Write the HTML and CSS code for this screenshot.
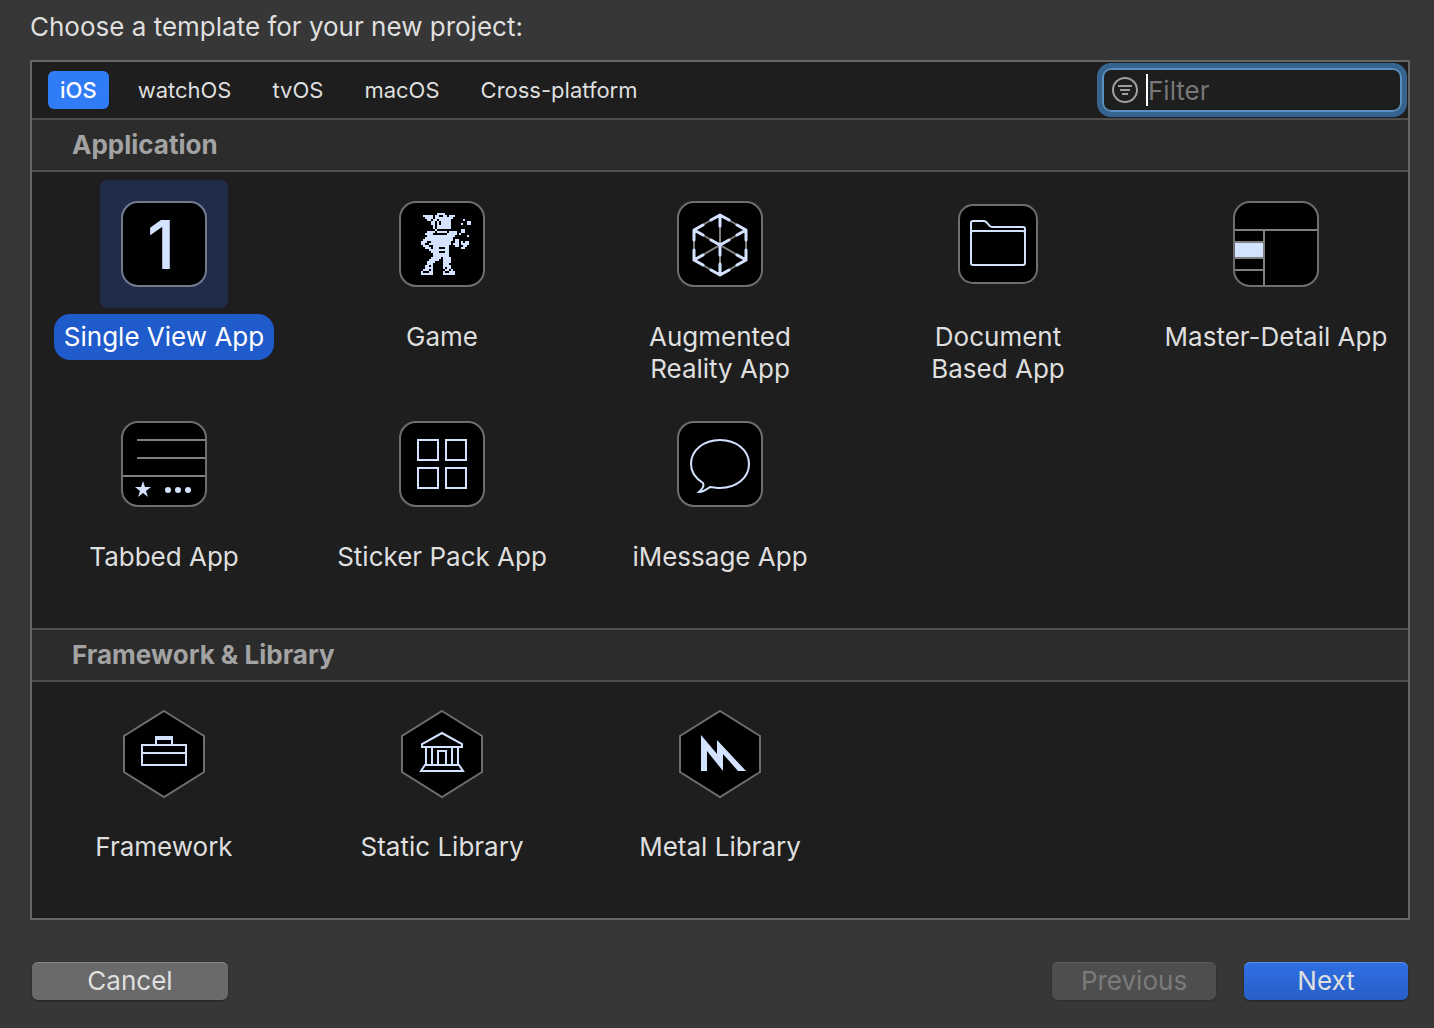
FILE: index.html
```html
<!DOCTYPE html>
<html lang="en">
<head>
<meta charset="utf-8">
<meta name="viewport" content="width=device-width, initial-scale=1">
<title>New Project</title>
<link rel="stylesheet" href="styles.css">
</head>
<body>
<main class="dialog">
  <h1 class="title">Choose a template for your new project:</h1>
  <div class="panel">
    <div class="toolbar">
      <nav class="tabs" aria-label="Platform">
        <button type="button" class="tab tab-active">iOS</button>
        <button type="button" class="tab">watchOS</button>
        <button type="button" class="tab">tvOS</button>
        <button type="button" class="tab">macOS</button>
        <button type="button" class="tab">Cross-platform</button>
      </nav>
      <label class="filter">
        <svg class="filter-icon" width="26" height="26" viewBox="0 0 26 26" aria-hidden="true"><circle cx="13" cy="13" r="12"/><path d="M6 9h14M8 13h10M10 17h6"/></svg>
        <span class="caret"></span>
        <input class="filter-input" type="text" placeholder="Filter" aria-label="Filter">
      </label>
    </div>

    <section>
      <h2 class="section-title">Application</h2>
      <div class="grid">
        <button type="button" class="item item-selected">
          <span class="tile"><svg class="icon" width="86" height="86" viewBox="0 0 86 86"><rect class="card" x="1" y="1" width="84" height="84" rx="16"/><text class="numeral" x="40" y="68">1</text></svg></span>
          <span class="label">Single View App</span>
        </button>
        <button type="button" class="item">
          <span class="tile"><svg class="icon" width="86" height="86" viewBox="0 0 86 86"><rect class="card" x="1" y="1" width="84" height="84" rx="16"/><g transform="translate(22 13) scale(2)"><path class="pixels" d="M8 0h4M1 1h5M7 1h2M11 1h2M14 1h3M2 2h4M7 2h9M3 3h2M6 3h2M9 3h6M21 3h1M5 4h2M8 4h1M10 4h5M5 5h2M8 5h1M10 5h5M23 4h2M23 5h2M20 5h1M6 6h1M8 6h7M6 7h1M8 7h7M20 8h2M20 9h2M7 8h1M3 9h4M8 9h5M14 9h4M2 10h4M13 10h5M19 10h1M3 11h14M23 11h1M2 12h14M1 13h15M17 13h2M0 14h3M5 14h10M17 14h2M20 14h1M22 14h2M0 15h2M4 15h11M16 15h3M20 15h4M1 16h3M6 16h8M17 16h2M21 16h2M2 17h3M6 17h3M12 17h2M20 17h2M4 18h10M5 19h4M12 19h2M6 20h8M6 21h8M5 22h5M11 22h4M4 23h5M11 23h4M3 24h4M11 24h4M3 25h3M11 25h3M2 26h2M5 26h1M11 26h4M2 27h4M11 27h1M13 27h2M1 28h3M5 28h1M12 28h2M15 28h1M0 29h1M4 29h2M11 29h1M14 29h3M0 30h6M11 30h6"/></g></svg></span>
          <span class="label">Game</span>
        </button>
        <button type="button" class="item">
          <span class="tile"><svg class="icon" width="86" height="86" viewBox="0 0 86 86"><rect class="card" x="1" y="1" width="84" height="84" rx="16"/><path class="rule" d="M43 14L69 29V59L43 74L17 59V29ZM43 14V74M17 29L69 59M69 29L17 59"/><path class="mark round" d="M43 25V14M34 19L43 14L52 19M43 63V74M34 69L43 74L52 69M17 39V29L26 24M17 29L26 34M69 39V29L60 24M69 29L60 34M17 49V59L26 64M17 59L26 54M69 49V59L60 64M69 59L60 54M43 54V44L34 39M43 44L52 39"/></svg></span>
          <span class="label">Augmented<br>Reality App</span>
        </button>
        <button type="button" class="item">
          <span class="tile"><svg class="icon" width="80" height="80" viewBox="0 0 80 80"><rect class="card" x="1" y="1" width="78" height="78" rx="14"/><path class="line" d="M13 19q0-2 2-2h11c4 0 4 6 8 6h31q2 0 2 2v34q0 2-2 2H15q-2 0-2-2zM13 29q0-2 2-2h50q2 0 2 2"/></svg></span>
          <span class="label">Document<br>Based App</span>
        </button>
        <button type="button" class="item">
          <span class="tile"><svg class="icon" width="86" height="86" viewBox="0 0 86 86"><rect class="card" x="1" y="1" width="84" height="84" rx="16"/><path class="solid" d="M2 42h28v14H2z"/><path class="rule" d="M2 29h82M31 29v55M2 41h28M2 57h28M2 69h28"/></svg></span>
          <span class="label">Master-Detail App</span>
        </button>
        <button type="button" class="item">
          <span class="tile"><svg class="icon" width="86" height="86" viewBox="0 0 86 86"><rect class="card" x="1" y="1" width="84" height="84" rx="16"/><path class="rule" d="M16 19h68M16 37h68M2 55h82"/><path class="solid" d="M22 60l2 6h6l-5 4 2 6-5-4-5 4 2-6-5-4h6z"/><circle class="solid" cx="47" cy="69" r="3"/><circle class="solid" cx="57" cy="69" r="3"/><circle class="solid" cx="67" cy="69" r="3"/></svg></span>
          <span class="label">Tabbed App</span>
        </button>
        <button type="button" class="item">
          <span class="tile"><svg class="icon" width="86" height="86" viewBox="0 0 86 86"><rect class="card" x="1" y="1" width="84" height="84" rx="16"/><path class="line" d="M19 19h20v20H19zM47 19h20v20H47zM19 47h20v20H19zM47 47h20v20H47z"/></svg></span>
          <span class="label">Sticker Pack App</span>
        </button>
        <button type="button" class="item">
          <span class="tile"><svg class="icon" width="86" height="86" viewBox="0 0 86 86"><rect class="card" x="1" y="1" width="84" height="84" rx="16"/><path class="line" d="M26 62C18 57 14 50 14 43C14 29 27 19 43 19S72 29 72 43S59 67 43 67C39 67 36 66 33 66C29 69 26 71 22 71C24 69 28 66 26 62z"/></svg></span>
          <span class="label">iMessage App</span>
        </button>
      </div>
    </section>

    <section>
      <h2 class="section-title">Framework &amp; Library</h2>
      <div class="grid">
        <button type="button" class="item">
          <span class="tile"><svg class="icon" width="84" height="90" viewBox="0 0 84 90"><path class="card" d="M42 2L82 27V63L42 88L2 63V27z"/><path class="line" d="M20 36h44v20H20zM20 44h44M34 36v-8h16v8M34 30h16"/></svg></span>
          <span class="label">Framework</span>
        </button>
        <button type="button" class="item">
          <span class="tile"><svg class="icon" width="84" height="90" viewBox="0 0 84 90"><path class="card" d="M42 2L82 27V63L42 88L2 63V27z"/><path class="line" d="M22 38v-3l20-11 20 11v3zM26 38v18M32 38v18M52 38v18M58 38v18M38 56V42h8v14M25 56h34l4 6H21z"/></svg></span>
          <span class="label">Static Library</span>
        </button>
        <button type="button" class="item">
          <span class="tile"><svg class="icon" width="84" height="90" viewBox="0 0 84 90"><path class="card" d="M42 2L82 27V63L42 88L2 63V27z"/><path class="solid" d="M23 26L39 45V31L68 62H60L45 45V62L29 42V62H23z"/></svg></span>
          <span class="label">Metal Library</span>
        </button>
      </div>
    </section>
  </div>

  <footer class="actions">
    <button type="button" class="button button-wide">Cancel</button>
    <div class="action-group">
      <button type="button" class="button" disabled>Previous</button>
      <button type="submit" class="button button-primary">Next</button>
    </div>
  </footer>
</main>
</body>
</html>
```
FILE: styles.css
```css
* {
  box-sizing: border-box;
}

body {
  margin: 0;
  min-height: 100vh;
  background: #373737;
  color: #dfdfdf;
  font-family: Inter, "Liberation Sans", sans-serif;
  font-size: 26px;
  line-height: 32px;
}

button,
input {
  margin: 0;
  padding: 0;
  border: 0;
  background: none;
  color: inherit;
  font: inherit;
}

.dialog {
  padding: 11px 24px 28px 30px;
}

.title {
  margin: 0 0 17px;
  font-size: 26px;
  font-weight: 400;
}

.panel {
  border: 2px solid #666;
  background: #1e1e1e;
}

.toolbar {
  display: flex;
  align-items: center;
  justify-content: space-between;
  height: 56px;
  padding: 0 6px 0 16px;
}

.tabs {
  display: flex;
  gap: 17px;
}

.tab {
  height: 38px;
  padding: 0 12px;
  border-radius: 6px;
  font-size: 22px;
}

.tab-active {
  background: #2f7cf6;
  color: #fff;
  font-weight: 500;
}

.filter {
  display: flex;
  align-items: center;
  width: 300px;
  height: 44px;
  padding: 0 8px;
  border: 2px solid #5a8fc0;
  border-radius: 9px;
  box-shadow: 0 0 0 5px #35658f;
}

.filter-icon {
  flex: none;
  margin-right: 8px;
  fill: none;
  stroke: #a0a0a0;
  stroke-width: 2;
}

.caret {
  flex: none;
  width: 2px;
  height: 32px;
  background: #fff;
}

.filter-input {
  flex: 1;
  min-width: 0;
  padding-top: 2px;
  outline: none;
}

.filter-input::placeholder {
  color: #777;
  opacity: 1;
}

.section-title {
  margin: 0;
  padding: 9px 40px;
  border: solid #4f4f4f;
  border-width: 2px 0;
  background: #2c2c2c;
  color: #a3a3a3;
  font-size: 26px;
  font-weight: 700;
}

.grid {
  display: grid;
  grid-template-columns: repeat(5, 1fr);
  grid-auto-rows: minmax(212px, auto);
  gap: 8px 14px;
  padding: 8px 0 16px;
}

.item {
  display: flex;
  flex-direction: column;
  align-items: center;
  gap: 6px;
}

.tile {
  display: flex;
  align-items: center;
  justify-content: center;
  width: 128px;
  height: 128px;
  border-radius: 8px;
}

.label {
  padding: 7px 10px;
  border-radius: 16px;
  white-space: nowrap;
}

.item-selected .tile {
  background: #1f2d4a;
}

.item-selected .label {
  background: #1f5bcb;
  color: #fff;
}

.card {
  fill: #000;
  stroke: #6e6e6e;
  stroke-width: 2;
}

.item-selected .card {
  stroke: #747b8c;
}

.rule {
  fill: none;
  stroke: #808080;
  stroke-width: 2;
}

.line,
.mark {
  fill: none;
  stroke: #d3e2ff;
  stroke-width: 2;
}

.mark {
  stroke-width: 3;
}

.round {
  stroke-linecap: round;
  stroke-linejoin: round;
}

.solid {
  fill: #d3e2ff;
}

.pixels {
  fill: none;
  stroke: #d3e2ff;
  shape-rendering: crispEdges;
}

.numeral {
  fill: #d3e2ff;
  font-size: 68px;
  font-weight: 500;
  text-anchor: middle;
}

.actions {
  display: flex;
  justify-content: space-between;
  padding: 42px 2px 0;
}

.action-group {
  display: flex;
  gap: 28px;
}

.button {
  width: 164px;
  height: 38px;
  border-radius: 6px;
  background: #6a6a6a;
  box-shadow: inset 0 1px #868686, 0 1px 2px #222;
}

.button-wide {
  width: 196px;
}

.button:disabled {
  background: #4e4e4e;
  color: #7b7b7b;
  box-shadow: inset 0 1px #5c5c5c, 0 1px 2px #2c2c2c;
}

.button-primary {
  background: linear-gradient(#2f6fe4, #285fc7);
  box-shadow: inset 0 1px #5b8eea, 0 1px 2px #222;
}
```
